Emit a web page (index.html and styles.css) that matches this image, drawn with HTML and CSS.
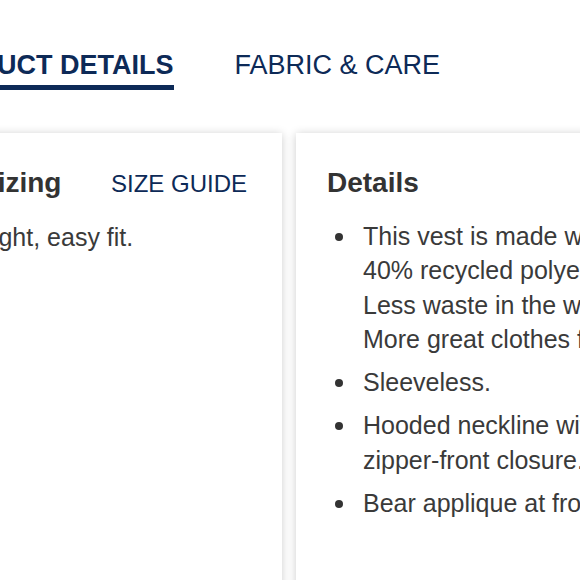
FILE: index.html
```html
<!DOCTYPE html>
<html lang="en">
<head>
<meta charset="utf-8">
<title>Product details</title>
<link rel="stylesheet" href="styles.css">
</head>
<body>
<div class="page">
  <nav class="tabs">
    <a class="tab tab-active">PRODUCT DETAILS</a>
    <a class="tab">FABRIC &amp; CARE</a>
  </nav>
  <div class="cards">
    <section class="card card-sizing">
      <div class="card-head">
        <h2 class="card-title">Sizing</h2>
        <a class="size-guide">SIZE GUIDE</a>
      </div>
      <p class="card-text">Light, easy fit.</p>
    </section>
    <section class="card card-details">
      <div class="card-head">
        <h2 class="card-title">Details</h2>
      </div>
      <ul class="bullets">
        <li>This vest is made with 40% recycled polyester. Less waste in the world. More great clothes for you.</li>
        <li>Sleeveless.</li>
        <li>Hooded neckline with zipper-front closure.</li>
        <li>Bear applique at front.</li>
      </ul>
    </section>
  </div>
</div>
</body>
</html>
```

FILE: styles.css
```css
html, body {
  margin: 0;
  padding: 0;
  overflow: hidden;
  background: #ffffff;
}

body {
  font-family: "Liberation Sans", Arial, sans-serif;
  color: #333333;
}

.page {
  margin-left: -52px;
  width: 760px;
}

.tabs {
  display: flex;
  gap: 61px;
  padding-top: 49px;
  margin-left: -29px;
}

.tab {
  font-size: 27px;
  line-height: 32px;
  color: #0d2a57;
  padding-bottom: 4px;
  border-bottom: 5px solid transparent;
  white-space: nowrap;
}

.tab-active {
  font-weight: 700;
  border-bottom-color: #0d2a57;
}

.cards {
  display: grid;
  grid-template-columns: 334px 401px;
  gap: 14px;
  margin-top: 43px;
}

.card {
  background: #ffffff;
  min-height: 520px;
  padding: 34px 35px 0 31px;
  box-shadow: 0 1px 9px rgba(0, 0, 0, 0.2);
}

.card-head {
  display: flex;
  align-items: baseline;
  justify-content: space-between;
}

.card-title {
  margin: 0;
  font-size: 28px;
  line-height: 32px;
  font-weight: 700;
  color: #333333;
}

.size-guide {
  font-size: 24px;
  line-height: 32px;
  color: #0d2a57;
  white-space: nowrap;
}

.card-text {
  margin: 20px 0 0;
  font-size: 25px;
  line-height: 34.3px;
  color: #3a3a3a;
}

.bullets {
  list-style: none;
  margin: 20px 0 0;
  padding: 0;
  font-size: 25px;
  line-height: 34.3px;
  color: #3a3a3a;
}

.bullets li {
  display: flex;
  margin-bottom: 9px;
}

.bullets li::before {
  content: "";
  flex: none;
  width: 8px;
  height: 8px;
  border-radius: 50%;
  background: #333333;
  margin: 14px 20px 0 8px;
}
```
